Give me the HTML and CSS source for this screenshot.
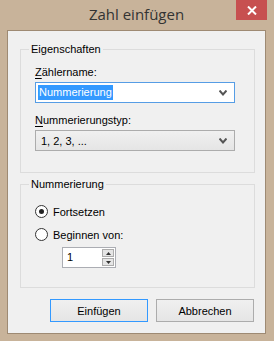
FILE: index.html
```html
<!DOCTYPE html>
<html lang="de">
<head>
  <meta charset="UTF-8" />
  <title>Zahl einfügen</title>
  <link rel="stylesheet" href="styles.css">
</head>
<body>
  <div class="window">
    <div class="titlebar">
      <span></span>
      <div class="title">Zahl einfügen</div>
      <button class="close" title="Schließen">
        <svg width="10" height="9" viewBox="0 0 10 9"><path d="M1 0.5 L9 8.5 M9 0.5 L1 8.5" stroke="#fff" stroke-width="2"/></svg>
      </button>
    </div>

    <div class="client">
      <div class="group props">
        <div class="group-title">Eigenschaften</div>
        <div class="label"><u>Z</u>ählername:</div>
        <div class="combo focused">
          <span class="sel">Nummerierung</span>
          <svg class="chev" width="8" height="6" viewBox="0 0 8 6"><path d="M0.5 0.5 L4 4.5 L7.5 0.5" fill="none" stroke="#555" stroke-width="2"/></svg>
        </div>
        <div class="label second"><u>N</u>ummerierungstyp:</div>
        <div class="combo">
          <span class="value">1, 2, 3, ...</span>
          <svg class="chev" width="8" height="6" viewBox="0 0 8 6"><path d="M0.5 0.5 L4 4.5 L7.5 0.5" fill="none" stroke="#555" stroke-width="2"/></svg>
        </div>
      </div>

      <div class="group numbering">
        <div class="group-title">Nummerierung</div>
        <label class="radio-row"><span class="radio checked"></span>Fortsetzen</label>
        <label class="radio-row"><span class="radio"></span>Beginnen von:</label>
        <div class="spin">
          <span class="spin-value">1</span>
          <div class="spin-buttons">
            <span class="spin-btn"><svg width="5" height="3" viewBox="0 0 5 3"><path d="M2.5 0 L5 3 L0 3 Z" fill="#333"/></svg></span>
            <span class="spin-btn"><svg width="5" height="3" viewBox="0 0 5 3"><path d="M0 0 L5 0 L2.5 3 Z" fill="#333"/></svg></span>
          </div>
        </div>
      </div>

      <div class="buttons">
        <button class="btn default">Einfügen</button>
        <button class="btn">Abbrechen</button>
      </div>
    </div>
  </div>
</body>
</html>
```

FILE: styles.css
```css
body {
  margin: 0;
  font-family: 'Liberation Sans', Arial, sans-serif;
  font-size: 11px;
  color: #000;
}
.window {
  width: 274px;
  height: 341px;
  box-sizing: border-box;
  background: #c8b39a;
  padding: 0 8px 7px 7px;
  display: flex;
  flex-direction: column;
}
.titlebar {
  height: 30px;
  display: grid;
  grid-template-columns: 1fr auto 1fr;
  align-items: start;
}
.title {
  font-family: 'Open Sans', sans-serif;
  font-size: 15px;
  color: #333;
  line-height: 20px;
  padding-top: 4px;
}
.close {
  justify-self: end;
  margin-right: -1px;
  width: 31px;
  height: 20px;
  border: none;
  padding: 0;
  background: #c75050;
  display: flex;
  align-items: center;
  justify-content: center;
}
.client {
  flex: 1;
  background: #f0f0f0;
  border: 1px solid #9e8a73;
  padding: 18px 10px 0 12px;
}
.group {
  border: 1px solid #dcdcdc;
  padding: 0 19px 0 14px;
}
.group-title {
  width: fit-content;
  margin: -8px 0 0 -6px;
  padding: 0 2px;
  background: #f0f0f0;
  line-height: 15px;
}
.props {
  padding-bottom: 21px;
}
.label {
  line-height: 15px;
  margin-top: 8px;
}
.label.second {
  margin-top: 10px;
}
.label u {
  text-decoration-thickness: 1px;
  text-underline-offset: 2px;
}
.combo {
  margin-top: 2px;
  height: 21px;
  box-sizing: border-box;
  border: 1px solid #acacac;
  background: linear-gradient(#f0f0f0, #e5e5e5);
  display: flex;
  align-items: center;
  padding: 0 4px 0 4px;
}
.combo.focused {
  border-color: #569de5;
  background: #fff;
  padding-left: 2px;
}
.sel {
  background: #3399ff;
  color: #fff;
  line-height: 15px;
  padding: 0 1px;
}
.value {
  padding-left: 1px;
}
.chev {
  margin-left: auto;
  margin-right: 3px;
}
.numbering {
  margin-top: 11px;
  padding-bottom: 19px;
}
.radio-row {
  display: flex;
  align-items: center;
  height: 13px;
  margin-top: 13px;
}
.numbering .radio-row:first-of-type {
  margin-top: 13px;
}
.radio-row + .radio-row {
  margin-top: 10px;
}
.radio {
  width: 13px;
  height: 13px;
  box-sizing: border-box;
  border: 1px solid #333;
  border-radius: 50%;
  background: #fff;
  margin-right: 5px;
  display: flex;
  align-items: center;
  justify-content: center;
}
.radio.checked::after {
  content: "";
  width: 5px;
  height: 5px;
  border-radius: 50%;
  background: #222;
}
.spin {
  margin: 6px 0 0 27px;
  width: 54px;
  height: 21px;
  box-sizing: border-box;
  border: 1px solid #abadb3;
  background: #fff;
  display: flex;
}
.spin-value {
  flex: 1;
  padding-left: 4px;
  line-height: 19px;
}
.spin-buttons {
  display: flex;
  flex-direction: column;
  gap: 1px;
  padding: 1px 1px 1px 0;
}
.spin-btn {
  width: 12px;
  flex: 1;
  box-sizing: border-box;
  border: 1px solid #acacac;
  background: #e5e5e5;
  display: flex;
  align-items: center;
  justify-content: center;
}
.buttons {
  display: flex;
  justify-content: flex-end;
  gap: 8px;
  margin-top: 11px;
  padding-right: 1px;
}
.btn {
  width: 98px;
  height: 23px;
  font-family: inherit;
  font-size: 11px;
  color: #000;
  border: 1px solid #acacac;
  background: linear-gradient(#f0f0f0, #e5e5e5);
  padding: 0;
}
.btn.default {
  border-color: #3399ff;
}
```
